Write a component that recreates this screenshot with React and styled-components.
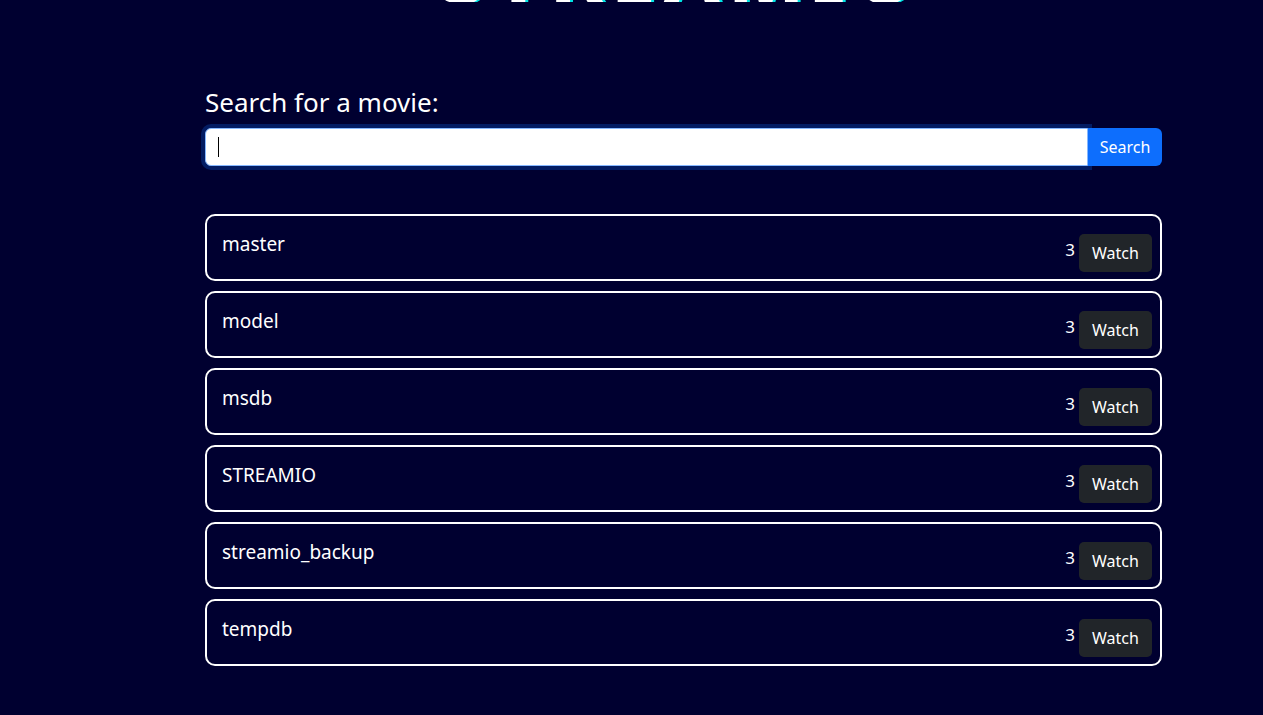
import React from "react";
import styled, { createGlobalStyle } from "styled-components";

const GlobalStyle = createGlobalStyle`
  html, body {
    margin: 0;
    padding: 0;
    background-color: #000030;
    font-family: "Noto Sans", "Open Sans", sans-serif;
    color: #fff;
  }
  * {
    box-sizing: border-box;
  }
`;

const Page = styled.div`
  min-height: 715px;
  padding-top: 1px;
`;

const Main = styled.main`
  width: 957px;
  margin-left: 205px;
`;

const TitleClip = styled.header`
  height: 2px;
  margin-top: -1px;
  overflow: hidden;
  display: flex;
  justify-content: center;
  align-items: flex-end;
`;

const Title = styled.h1`
  flex: none;
  margin: 0 0 -10px;
  font-size: 80px;
  line-height: 80px;
  font-weight: 800;
  letter-spacing: 8px;
  color: #fff;
  text-shadow: 3px 0 0 #00e5e5;
`;

const Label = styled.label`
  display: block;
  margin-top: 82px;
  font-size: 26px;
  line-height: 36px;
`;

const SearchRow = styled.form`
  display: flex;
  margin-top: 8px;
  height: 38px;
`;

const Field = styled.div`
  flex: 1;
  position: relative;
  display: flex;
`;

const Input = styled.input`
  flex: 1;
  height: 38px;
  padding: 0 12px;
  font-family: inherit;
  font-size: 16px;
  color: #212529;
  background: #fff;
  border: 1px solid #86b7fe;
  border-radius: 6px 0 0 6px;
  outline: none;
  box-shadow: 0 0 0 4px rgba(13, 110, 253, 0.25);
  caret-color: transparent;
`;

const Caret = styled.span`
  position: absolute;
  left: 13px;
  top: 9px;
  width: 1px;
  height: 20px;
  background: #000;
  pointer-events: none;
`;

const SearchButton = styled.button`
  width: 74px;
  height: 38px;
  border: none;
  border-radius: 0 6px 6px 0;
  background: #0d6efd;
  color: #fff;
  font-family: inherit;
  font-size: 16px;
  cursor: pointer;
  position: relative;
  z-index: 1;
`;

const List = styled.ul`
  list-style: none;
  margin: 48px 0 0;
  padding: 0;
  display: flex;
  flex-direction: column;
  gap: 10px;
`;

const Item = styled.li`
  display: flex;
  align-items: flex-start;
  height: 67px;
  padding: 0 8px 0 15px;
  border: 2px solid #fff;
  border-radius: 10px;
`;

const Name = styled.span`
  margin-top: 15px;
  font-size: 19px;
  line-height: 26px;
`;

const Actions = styled.div`
  margin-left: auto;
  margin-top: 18px;
  display: flex;
  align-items: center;
  gap: 4px;
`;

const Count = styled.span`
  font-size: 17px;
  line-height: 32px;
  margin-top: -6px;
`;

const WatchButton = styled.button`
  width: 73px;
  height: 38px;
  border: none;
  border-radius: 5px;
  background: #212529;
  color: #fff;
  font-family: inherit;
  font-size: 16px;
  cursor: pointer;
`;

const databases = ["master", "model", "msdb", "STREAMIO", "streamio_backup", "tempdb"];

export default function App() {
  return (
    <Page>
      <GlobalStyle />
      <Main>
        <TitleClip>
          <Title>STREAMIO</Title>
        </TitleClip>
        <Label htmlFor="movie">Search for a movie:</Label>
        <SearchRow onSubmit={(e) => e.preventDefault()}>
          <Field>
            <Input id="movie" type="text" autoFocus />
            <Caret />
          </Field>
          <SearchButton type="submit">Search</SearchButton>
        </SearchRow>
        <List>
          {databases.map((name) => (
            <Item key={name}>
              <Name>{name}</Name>
              <Actions>
                <Count>3</Count>
                <WatchButton>Watch</WatchButton>
              </Actions>
            </Item>
          ))}
        </List>
      </Main>
    </Page>
  );
}
